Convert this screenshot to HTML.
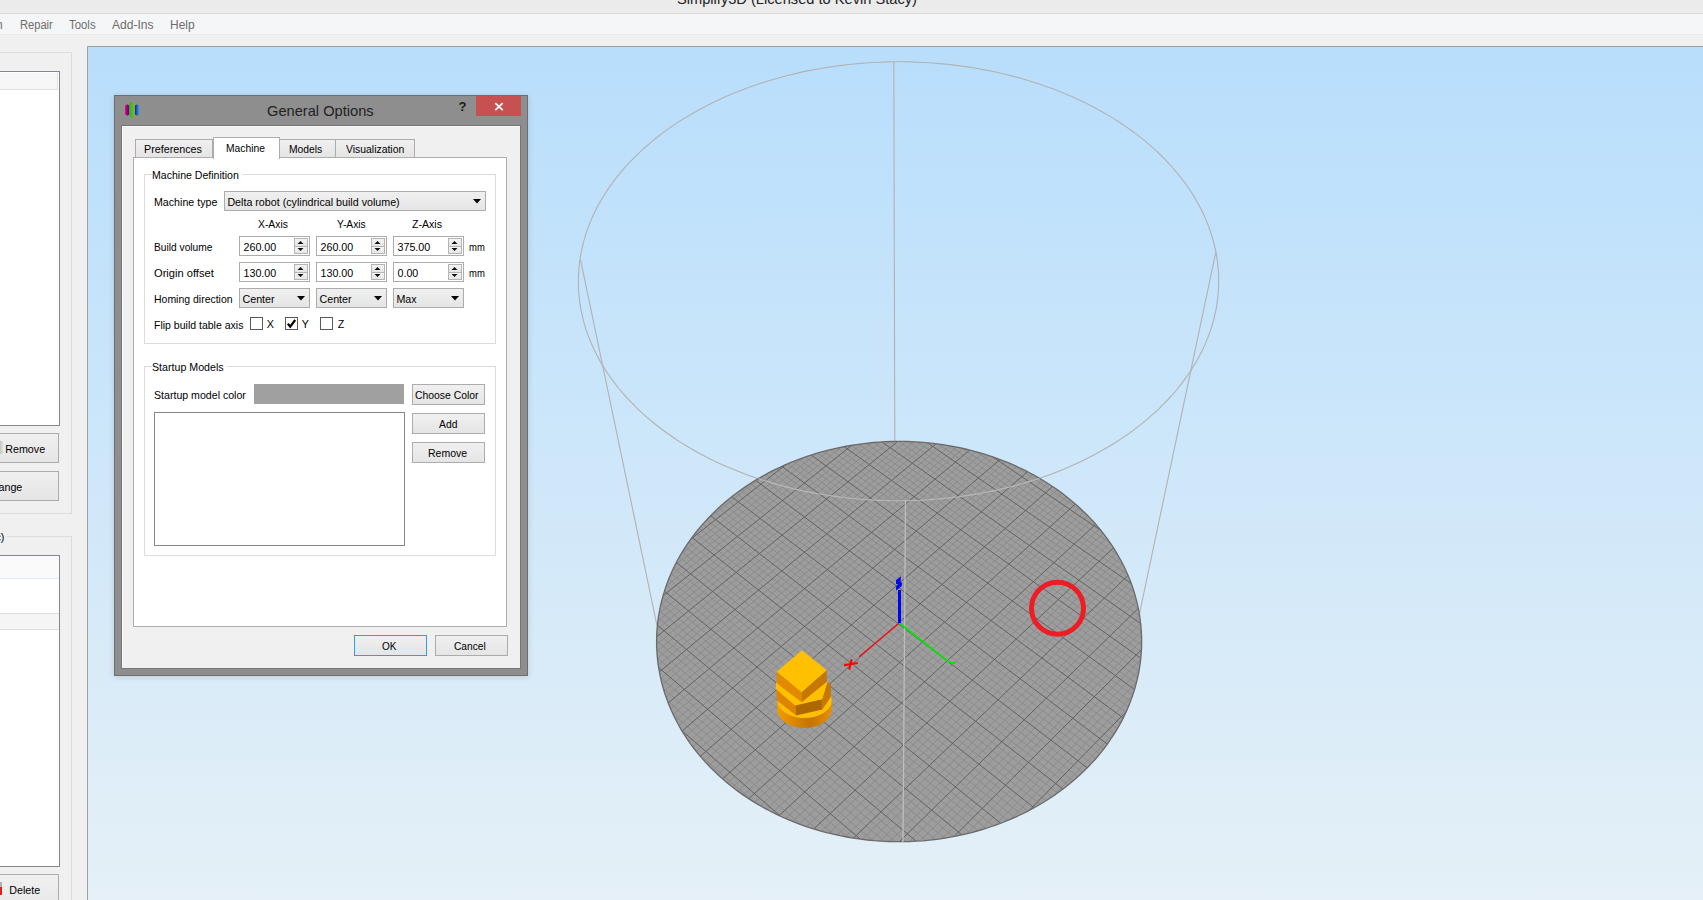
<!DOCTYPE html>
<html><head><meta charset="utf-8"><style>
html,body{margin:0;padding:0}
body{width:1703px;height:900px;position:relative;overflow:hidden;background:#f0f0f0;font-family:"Liberation Sans",sans-serif}
.b{position:absolute;box-sizing:content-box}
.t{position:absolute;white-space:nowrap;line-height:1}
</style></head><body>
<div class="b" style="left:0px;top:0px;width:1703px;height:13px;background:#ebebeb"></div>
<div class="b" style="left:0px;top:13px;width:1703px;height:1px;background:#d9d9d9"></div>
<div class="t" style="left:676.50px;top:-9.00px;font-size:15px;color:#222;transform:scaleX(0.9755);transform-origin:0 0;">Simplify3D (Licensed to Kevin Stacy)</div>
<div class="b" style="left:0px;top:14px;width:1703px;height:20px;background:#f5f6f7"></div>
<div class="b" style="left:0px;top:34px;width:1703px;height:1px;background:#e8e8e8"></div>
<div class="t" style="left:-4px;top:19.00px;font-size:12px;color:#6d6d6d;">n</div>
<div class="t" style="left:20.00px;top:19.00px;font-size:12px;color:#6d6d6d;transform:scaleX(0.9281);transform-origin:0 0;">Repair</div>
<div class="t" style="left:69.20px;top:19.00px;font-size:12px;color:#6d6d6d;transform:scaleX(0.9493);transform-origin:0 0;">Tools</div>
<div class="t" style="left:112.20px;top:19.00px;font-size:12px;color:#6d6d6d;transform:scaleX(1.0063);transform-origin:0 0;">Add-Ins</div>
<div class="t" style="left:170.20px;top:19.00px;font-size:12px;color:#6d6d6d;transform:scaleX(0.9976);transform-origin:0 0;">Help</div>
<div class="b" style="left:-10px;top:52px;width:80px;height:460px;border:1px solid #dcdcdc"></div>
<div class="b" style="left:-10px;top:71px;width:68px;height:353px;border:1px solid #828790;background:#fff"></div>
<div class="b" style="left:-10px;top:73px;width:67px;height:16px;background:#f7f7f7;border-right:1px solid #e0e0e0;border-bottom:1px solid #e0e0e0"></div>
<div class="b" style="left:-10px;top:433px;width:67px;height:28px;border:1px solid #acacac;background:linear-gradient(#f0f0f0,#e5e5e5);"></div>
<div class="t" style="left:5.3px;top:444.00px;font-size:10.7px;color:#000;">Remove</div>
<div class="b" style="left:-2px;top:441px;width:5px;height:13px;background:linear-gradient(90deg,#b0b0b0,#e0e0e0)"></div>
<div class="b" style="left:-10px;top:471px;width:67px;height:28px;border:1px solid #acacac;background:linear-gradient(#f0f0f0,#e5e5e5);"></div>
<div class="t" style="left:-1.5px;top:482.00px;font-size:10.7px;color:#000;">ange</div>
<div class="b" style="left:-10px;top:536px;width:80px;height:400px;border:1px solid #dcdcdc"></div>
<div class="t" style="left:-4.5px;top:532.00px;font-size:10.7px;color:#000;background:#f0f0f0;padding-right:3px">c)</div>
<div class="b" style="left:-10px;top:555px;width:68px;height:310px;border:1px solid #828790;background:#fff"></div>
<div class="b" style="left:-10px;top:556px;width:69px;height:22px;background:#fafafa;border-bottom:1px solid #e3ebf5"></div>
<div class="b" style="left:-10px;top:613px;width:69px;height:15px;background:#f5f5f5;border-top:1px solid #dedede;border-bottom:1px solid #dedede"></div>
<div class="b" style="left:-10px;top:874px;width:67px;height:44px;border:1px solid #acacac;background:linear-gradient(#f0f0f0,#e5e5e5);"></div>
<div class="t" style="left:9.3px;top:885.00px;font-size:10.7px;color:#000;">Delete</div>
<div class="b" style="left:-2px;top:882px;width:4px;height:13px;background:linear-gradient(#b0b0b0 40%,#e02020 40%)"></div>
<svg class="b" style="left:0;top:0" width="1703" height="900"><defs><linearGradient id="sky" x1="0" y1="0" x2="0" y2="1"><stop offset="0" stop-color="#b8defc"/><stop offset="1" stop-color="#e5f0f7"/></linearGradient><clipPath id="bedclip"><path d="M722.8,779.1 L727.6,783.2 L732.4,787.1 L737.4,790.9 L742.6,794.6 L747.9,798.1 L753.3,801.6 L758.8,804.9 L764.5,808.1 L770.3,811.2 L776.1,814.2 L782.1,817.0 L788.2,819.6 L794.4,822.2 L800.7,824.6 L807.0,826.8 L813.5,828.9 L820.0,830.8 L826.6,832.6 L833.2,834.2 L840.0,835.7 L846.7,837.0 L853.5,838.2 L860.4,839.2 L867.3,840.0 L874.2,840.7 L881.1,841.2 L888.1,841.5 L895.1,841.7 L902.0,841.7 L909.0,841.6 L915.9,841.2 L922.9,840.8 L929.8,840.1 L936.7,839.3 L943.6,838.3 L950.4,837.2 L957.1,835.9 L963.9,834.4 L970.5,832.8 L977.1,831.0 L983.7,829.1 L990.1,827.0 L996.5,824.8 L1002.8,822.5 L1009.0,819.9 L1015.1,817.3 L1021.1,814.5 L1027.0,811.6 L1032.8,808.5 L1038.5,805.3 L1044.0,802.0 L1049.5,798.5 L1054.8,795.0 L1059.9,791.3 L1065.0,787.5 L1069.9,783.6 L1074.6,779.6 L1079.2,775.5 L1083.7,771.3 L1088.0,767.0 L1092.2,762.6 L1096.2,758.2 L1100.0,753.6 L1103.7,749.0 L1107.2,744.3 L1110.5,739.5 L1113.7,734.7 L1116.7,729.8 L1119.6,724.9 L1122.3,719.9 L1124.8,714.8 L1127.1,709.7 L1129.3,704.6 L1131.2,699.4 L1133.0,694.3 L1134.7,689.0 L1136.1,683.8 L1137.4,678.6 L1138.6,673.3 L1139.5,668.0 L1140.3,662.7 L1140.9,657.4 L1141.3,652.2 L1141.6,646.9 L1141.6,641.6 L1141.6,636.4 L1141.3,631.1 L1140.9,625.9 L1140.3,620.7 L1139.6,615.5 L1138.7,610.4 L1137.7,605.3 L1136.4,600.2 L1135.1,595.2 L1133.6,590.2 L1131.9,585.2 L1130.1,580.3 L1128.1,575.5 L1126.0,570.7 L1123.8,566.0 L1121.4,561.3 L1118.8,556.7 L1116.2,552.2 L1113.4,547.7 L1110.5,543.3 L1107.4,538.9 L1104.2,534.7 L1100.9,530.5 L1097.5,526.3 L1094.0,522.3 L1090.4,518.4 L1086.6,514.5 L1082.7,510.7 L1078.8,507.0 L1074.7,503.4 L1070.5,499.9 L1066.3,496.4 L1061.9,493.1 L1057.5,489.9 L1052.9,486.7 L1048.3,483.7 L1043.6,480.7 L1038.8,477.9 L1034.0,475.1 L1029.1,472.5 L1024.1,469.9 L1019.0,467.5 L1013.9,465.2 L1008.7,462.9 L1003.4,460.8 L998.1,458.8 L992.8,456.9 L987.4,455.1 L981.9,453.4 L976.4,451.8 L970.9,450.3 L965.3,449.0 L959.7,447.7 L954.1,446.6 L948.4,445.6 L942.7,444.6 L937.0,443.8 L931.3,443.2 L925.5,442.6 L919.8,442.1 L914.0,441.8 L908.2,441.5 L902.4,441.4 L896.6,441.4 L890.9,441.5 L885.1,441.7 L879.3,442.1 L873.5,442.5 L867.8,443.1 L862.1,443.8 L856.3,444.6 L850.7,445.5 L845.0,446.5 L839.3,447.6 L833.7,448.8 L828.2,450.2 L822.6,451.7 L817.1,453.2 L811.7,454.9 L806.3,456.7 L800.9,458.6 L795.6,460.6 L790.3,462.7 L785.1,464.9 L780.0,467.3 L774.9,469.7 L769.9,472.2 L765.0,474.9 L760.1,477.6 L755.3,480.4 L750.6,483.4 L746.0,486.4 L741.4,489.6 L737.0,492.8 L732.6,496.1 L728.3,499.5 L724.1,503.0 L720.1,506.6 L716.1,510.3 L712.2,514.1 L708.4,518.0 L704.8,521.9 L701.2,525.9 L697.8,530.0 L694.5,534.2 L691.3,538.5 L688.2,542.8 L685.3,547.2 L682.5,551.7 L679.8,556.2 L677.2,560.8 L674.8,565.5 L672.5,570.2 L670.4,575.0 L668.4,579.8 L666.6,584.7 L664.9,589.7 L663.4,594.7 L662.0,599.7 L660.7,604.7 L659.7,609.8 L658.7,615.0 L658.0,620.1 L657.4,625.3 L656.9,630.6 L656.7,635.8 L656.6,641.0 L656.6,646.3 L656.9,651.6 L657.3,656.9 L657.8,662.2 L658.6,667.4 L659.5,672.7 L660.6,678.0 L661.8,683.2 L663.3,688.5 L664.9,693.7 L666.7,698.9 L668.6,704.0 L670.8,709.2 L673.1,714.3 L675.5,719.3 L678.2,724.3 L681.0,729.3 L684.0,734.1 L687.1,739.0 L690.5,743.8 L694.0,748.5 L697.6,753.1 L701.4,757.6 L705.4,762.1 L709.5,766.5 L713.8,770.8 L718.2,775.0 Z"/></clipPath><linearGradient id="basegrad" x1="0" y1="0" x2="1" y2="0"><stop offset="0" stop-color="#f59b00"/><stop offset="0.6" stop-color="#c47400"/><stop offset="1" stop-color="#e69000"/></linearGradient></defs><rect x="87" y="46" width="1616" height="854" fill="url(#sky)"/><path d="M87.5,900V46.5H1703" fill="none" stroke="#a0a0a0" stroke-width="1"/><path d="M661.0,428.7 L667.2,433.3 L673.7,437.7 L680.3,442.1 L687.1,446.3 L694.2,450.4 L701.4,454.4 L708.7,458.2 L716.3,461.9 L724.0,465.4 L731.9,468.8 L740.0,472.1 L748.1,475.2 L756.5,478.1 L764.9,480.8 L773.5,483.4 L782.2,485.9 L791.0,488.1 L800.0,490.2 L809.0,492.1 L818.1,493.8 L827.3,495.3 L836.5,496.6 L845.8,497.8 L855.2,498.8 L864.6,499.5 L874.0,500.1 L883.4,500.5 L892.9,500.7 L902.4,500.7 L911.9,500.5 L921.3,500.2 L930.8,499.6 L940.2,498.8 L949.5,497.9 L958.8,496.8 L968.1,495.4 L977.3,493.9 L986.4,492.2 L995.4,490.4 L1004.4,488.3 L1013.2,486.1 L1021.9,483.7 L1030.5,481.1 L1039.0,478.4 L1047.4,475.5 L1055.6,472.4 L1063.7,469.2 L1071.6,465.8 L1079.3,462.2 L1086.9,458.6 L1094.3,454.7 L1101.6,450.8 L1108.6,446.7 L1115.5,442.5 L1122.2,438.1 L1128.6,433.7 L1134.9,429.1 L1141.0,424.4 L1146.8,419.6 L1152.4,414.7 L1157.9,409.8 L1163.0,404.7 L1168.0,399.5 L1172.8,394.3 L1177.3,389.0 L1181.6,383.6 L1185.6,378.2 L1189.5,372.7 L1193.0,367.1 L1196.4,361.5 L1199.5,355.8 L1202.4,350.2 L1205.0,344.4 L1207.4,338.7 L1209.6,332.9 L1211.6,327.1 L1213.3,321.3 L1214.7,315.5 L1216.0,309.6 L1217.0,303.8 L1217.7,298.0 L1218.3,292.1 L1218.6,286.3 L1218.7,280.5 L1218.6,274.8 L1218.2,269.0 L1217.6,263.3 L1216.9,257.6 L1215.9,251.9 L1214.7,246.3 L1213.2,240.7 L1211.6,235.2 L1209.8,229.7 L1207.8,224.2 L1205.6,218.9 L1203.2,213.5 L1200.6,208.3 L1197.8,203.0 L1194.8,197.9 L1191.7,192.8 L1188.4,187.8 L1184.9,182.9 L1181.2,178.0 L1177.4,173.3 L1173.4,168.6 L1169.3,164.0 L1165.0,159.4 L1160.6,155.0 L1156.0,150.6 L1151.3,146.3 L1146.4,142.2 L1141.4,138.1 L1136.3,134.1 L1131.0,130.2 L1125.6,126.4 L1120.1,122.7 L1114.5,119.1 L1108.8,115.6 L1102.9,112.2 L1097.0,108.9 L1091.0,105.7 L1084.8,102.6 L1078.6,99.7 L1072.3,96.8 L1065.9,94.0 L1059.4,91.4 L1052.8,88.8 L1046.1,86.4 L1039.4,84.1 L1032.6,81.9 L1025.8,79.8 L1018.9,77.8 L1011.9,75.9 L1004.9,74.2 L997.8,72.5 L990.7,71.0 L983.5,69.6 L976.3,68.3 L969.1,67.1 L961.8,66.1 L954.5,65.1 L947.2,64.3 L939.8,63.6 L932.4,63.0 L925.1,62.5 L917.7,62.2 L910.3,61.9 L902.8,61.8 L895.4,61.8 L888.0,61.9 L880.6,62.2 L873.2,62.5 L865.8,63.0 L858.4,63.6 L851.1,64.3 L843.7,65.1 L836.4,66.0 L829.2,67.1 L821.9,68.2 L814.7,69.5 L807.5,70.9 L800.4,72.4 L793.3,74.1 L786.3,75.8 L779.3,77.7 L772.4,79.7 L765.5,81.7 L758.7,83.9 L752.0,86.2 L745.3,88.7 L738.8,91.2 L732.3,93.8 L725.8,96.6 L719.5,99.5 L713.2,102.4 L707.1,105.5 L701.0,108.7 L695.1,112.0 L689.2,115.4 L683.5,118.8 L677.8,122.4 L672.3,126.1 L666.9,129.9 L661.6,133.8 L656.5,137.8 L651.5,141.9 L646.6,146.0 L641.8,150.3 L637.2,154.6 L632.7,159.1 L628.4,163.6 L624.3,168.2 L620.3,172.9 L616.4,177.7 L612.7,182.5 L609.2,187.4 L605.9,192.4 L602.7,197.5 L599.7,202.6 L596.9,207.8 L594.3,213.1 L591.8,218.4 L589.6,223.8 L587.5,229.2 L585.7,234.7 L584.0,240.3 L582.6,245.8 L581.3,251.5 L580.3,257.1 L579.5,262.8 L578.9,268.5 L578.5,274.3 L578.3,280.0 L578.4,285.8 L578.7,291.6 L579.2,297.5 L579.9,303.3 L580.9,309.1 L582.1,315.0 L583.5,320.8 L585.1,326.6 L587.0,332.4 L589.2,338.2 L591.5,343.9 L594.1,349.6 L597.0,355.3 L600.0,361.0 L603.4,366.6 L606.9,372.2 L610.7,377.7 L614.7,383.1 L618.9,388.5 L623.4,393.8 L628.1,399.0 L633.1,404.2 L638.2,409.3 L643.6,414.3 L649.2,419.2 L655.0,424.0 Z" fill="none" stroke="#b2b2b2" stroke-width="1.1"/><path d="M893.8,62L894.8,441M580.5,259.6L657,625.6M1215.9,251.8L1139,616" fill="none" stroke="#b2b2b2" stroke-width="1.1"/><path d="M722.8,779.1 L727.6,783.2 L732.4,787.1 L737.4,790.9 L742.6,794.6 L747.9,798.1 L753.3,801.6 L758.8,804.9 L764.5,808.1 L770.3,811.2 L776.1,814.2 L782.1,817.0 L788.2,819.6 L794.4,822.2 L800.7,824.6 L807.0,826.8 L813.5,828.9 L820.0,830.8 L826.6,832.6 L833.2,834.2 L840.0,835.7 L846.7,837.0 L853.5,838.2 L860.4,839.2 L867.3,840.0 L874.2,840.7 L881.1,841.2 L888.1,841.5 L895.1,841.7 L902.0,841.7 L909.0,841.6 L915.9,841.2 L922.9,840.8 L929.8,840.1 L936.7,839.3 L943.6,838.3 L950.4,837.2 L957.1,835.9 L963.9,834.4 L970.5,832.8 L977.1,831.0 L983.7,829.1 L990.1,827.0 L996.5,824.8 L1002.8,822.5 L1009.0,819.9 L1015.1,817.3 L1021.1,814.5 L1027.0,811.6 L1032.8,808.5 L1038.5,805.3 L1044.0,802.0 L1049.5,798.5 L1054.8,795.0 L1059.9,791.3 L1065.0,787.5 L1069.9,783.6 L1074.6,779.6 L1079.2,775.5 L1083.7,771.3 L1088.0,767.0 L1092.2,762.6 L1096.2,758.2 L1100.0,753.6 L1103.7,749.0 L1107.2,744.3 L1110.5,739.5 L1113.7,734.7 L1116.7,729.8 L1119.6,724.9 L1122.3,719.9 L1124.8,714.8 L1127.1,709.7 L1129.3,704.6 L1131.2,699.4 L1133.0,694.3 L1134.7,689.0 L1136.1,683.8 L1137.4,678.6 L1138.6,673.3 L1139.5,668.0 L1140.3,662.7 L1140.9,657.4 L1141.3,652.2 L1141.6,646.9 L1141.6,641.6 L1141.6,636.4 L1141.3,631.1 L1140.9,625.9 L1140.3,620.7 L1139.6,615.5 L1138.7,610.4 L1137.7,605.3 L1136.4,600.2 L1135.1,595.2 L1133.6,590.2 L1131.9,585.2 L1130.1,580.3 L1128.1,575.5 L1126.0,570.7 L1123.8,566.0 L1121.4,561.3 L1118.8,556.7 L1116.2,552.2 L1113.4,547.7 L1110.5,543.3 L1107.4,538.9 L1104.2,534.7 L1100.9,530.5 L1097.5,526.3 L1094.0,522.3 L1090.4,518.4 L1086.6,514.5 L1082.7,510.7 L1078.8,507.0 L1074.7,503.4 L1070.5,499.9 L1066.3,496.4 L1061.9,493.1 L1057.5,489.9 L1052.9,486.7 L1048.3,483.7 L1043.6,480.7 L1038.8,477.9 L1034.0,475.1 L1029.1,472.5 L1024.1,469.9 L1019.0,467.5 L1013.9,465.2 L1008.7,462.9 L1003.4,460.8 L998.1,458.8 L992.8,456.9 L987.4,455.1 L981.9,453.4 L976.4,451.8 L970.9,450.3 L965.3,449.0 L959.7,447.7 L954.1,446.6 L948.4,445.6 L942.7,444.6 L937.0,443.8 L931.3,443.2 L925.5,442.6 L919.8,442.1 L914.0,441.8 L908.2,441.5 L902.4,441.4 L896.6,441.4 L890.9,441.5 L885.1,441.7 L879.3,442.1 L873.5,442.5 L867.8,443.1 L862.1,443.8 L856.3,444.6 L850.7,445.5 L845.0,446.5 L839.3,447.6 L833.7,448.8 L828.2,450.2 L822.6,451.7 L817.1,453.2 L811.7,454.9 L806.3,456.7 L800.9,458.6 L795.6,460.6 L790.3,462.7 L785.1,464.9 L780.0,467.3 L774.9,469.7 L769.9,472.2 L765.0,474.9 L760.1,477.6 L755.3,480.4 L750.6,483.4 L746.0,486.4 L741.4,489.6 L737.0,492.8 L732.6,496.1 L728.3,499.5 L724.1,503.0 L720.1,506.6 L716.1,510.3 L712.2,514.1 L708.4,518.0 L704.8,521.9 L701.2,525.9 L697.8,530.0 L694.5,534.2 L691.3,538.5 L688.2,542.8 L685.3,547.2 L682.5,551.7 L679.8,556.2 L677.2,560.8 L674.8,565.5 L672.5,570.2 L670.4,575.0 L668.4,579.8 L666.6,584.7 L664.9,589.7 L663.4,594.7 L662.0,599.7 L660.7,604.7 L659.7,609.8 L658.7,615.0 L658.0,620.1 L657.4,625.3 L656.9,630.6 L656.7,635.8 L656.6,641.0 L656.6,646.3 L656.9,651.6 L657.3,656.9 L657.8,662.2 L658.6,667.4 L659.5,672.7 L660.6,678.0 L661.8,683.2 L663.3,688.5 L664.9,693.7 L666.7,698.9 L668.6,704.0 L670.8,709.2 L673.1,714.3 L675.5,719.3 L678.2,724.3 L681.0,729.3 L684.0,734.1 L687.1,739.0 L690.5,743.8 L694.0,748.5 L697.6,753.1 L701.4,757.6 L705.4,762.1 L709.5,766.5 L713.8,770.8 L718.2,775.0 Z" fill="#9d9d9d"/><g clip-path="url(#bedclip)"><path d="M1013.8,465.1L1086.7,514.5M976.2,451.7L1110.6,543.4M962.2,448.3L1117.7,554.7M949.6,445.8L1123.2,565.0M938.2,444.0L1127.7,574.5M917.5,442.0L1134.2,592.2M908.0,441.5L1136.5,600.4M898.9,441.4L1138.3,608.4M890.2,441.5L1139.7,616.1M873.8,442.5L1141.3,630.9M866.0,443.3L1141.6,638.0M858.5,444.2L1141.6,644.9M851.2,445.4L1141.3,651.7M837.2,448.1L1140.0,664.8M830.4,449.6L1139.0,671.1M823.9,451.3L1137.7,677.4M817.5,453.1L1136.2,683.5M805.1,457.1L1132.7,695.4M799.1,459.3L1130.6,701.2M793.2,461.5L1128.3,706.9M787.5,463.9L1125.8,712.5M776.4,469.0L1120.4,723.4M771.0,471.7L1117.4,728.7M765.7,474.5L1114.2,733.9M760.6,477.3L1110.8,739.1M750.5,483.4L1103.6,749.0M745.7,486.6L1099.8,753.9M741.0,489.9L1095.8,758.6M736.3,493.3L1091.6,763.3M727.3,500.3L1082.7,772.3M723.0,504.0L1078.0,776.7M718.7,507.8L1073.1,780.9M714.6,511.7L1068.1,785.1M706.7,519.9L1057.5,793.1M702.8,524.1L1051.9,796.9M699.1,528.4L1046.2,800.7M695.5,532.9L1040.3,804.3M688.7,542.2L1027.9,811.1M685.4,547.0L1021.4,814.4M682.3,552.0L1014.7,817.5M679.3,557.1L1007.8,820.4M673.7,567.8L993.4,825.9M671.1,573.4L985.9,828.4M668.7,579.1L978.1,830.8M666.5,585.0L970.1,832.9M662.6,597.5L953.4,836.6M660.9,604.0L944.5,838.2M659.5,610.8L935.4,839.5M658.3,617.8L926.0,840.5M656.8,632.8L906.0,841.6M656.6,640.8L895.4,841.7M656.7,649.2L884.3,841.4M657.4,658.1L872.6,840.5M660.5,677.6L847.3,837.1M663.3,688.5L833.2,834.2M667.3,700.5L817.9,830.2M673.0,714.2L800.8,824.6M698.0,753.5L752.8,801.3M763.1,475.9L706.1,520.4M802.7,457.9L681.5,553.2M816.9,453.3L674.9,565.3M829.5,449.9L669.9,576.2M841.1,447.2L666.1,586.2M861.9,443.8L660.8,604.6M871.5,442.7L659.0,613.1M880.6,442.0L657.8,621.3M889.4,441.6L657.0,629.2M905.9,441.5L656.6,644.2M913.8,441.8L656.8,651.4M921.5,442.2L657.4,658.4M928.9,442.9L658.2,665.2M943.2,444.7L660.7,678.4M950.0,445.8L662.2,684.7M956.8,447.1L664.0,691.0M963.3,448.5L666.0,697.0M976.1,451.7L670.6,708.8M982.2,453.5L673.2,714.6M988.3,455.4L676.0,720.2M994.2,457.4L678.9,725.6M1005.7,461.7L685.4,736.3M1011.3,464.1L688.8,741.4M1016.8,466.5L692.5,746.5M1022.2,469.0L696.3,751.4M1032.7,474.4L704.4,761.0M1037.8,477.3L708.7,765.6M1042.9,480.3L713.1,770.1M1047.8,483.3L717.7,774.5M1057.3,489.8L727.4,783.0M1062.0,493.2L732.5,787.1M1066.5,496.6L737.7,791.1M1071.0,500.2L743.2,795.0M1079.6,507.8L754.5,802.3M1083.8,511.7L760.4,805.8M1087.9,515.8L766.4,809.2M1091.9,520.0L772.6,812.4M1099.5,528.7L785.6,818.5M1103.2,533.3L792.4,821.4M1106.7,538.0L799.3,824.1M1110.2,542.8L806.4,826.6M1116.7,553.0L821.3,831.2M1119.8,558.3L829.0,833.2M1122.7,563.8L836.9,835.1M1125.5,569.5L845.0,836.7M1130.5,581.5L862.0,839.4M1132.8,587.8L870.9,840.4M1134.9,594.4L880.1,841.1M1136.7,601.2L889.5,841.6M1139.6,615.8L909.4,841.5M1140.7,623.6L919.8,841.0M1141.4,631.8L930.7,840.0M1141.6,640.5L942.1,838.5M1140.6,659.7L966.7,833.8M1139.1,670.4L980.1,830.2M1136.5,682.3L994.6,825.5M1132.6,695.7L1010.6,819.2M1115.0,732.6L1052.5,796.5" fill="none" stroke="#868686" stroke-width="0.8"/><path d="M992.6,456.8L1101.1,530.6M927.5,442.8L1131.3,583.6M881.9,441.9L1140.7,623.6M844.1,446.6L1140.8,658.3M811.2,455.1L1134.5,689.5M781.9,466.4L1123.2,718.0M755.5,480.3L1107.3,744.1M731.8,496.8L1087.2,767.8M710.6,515.7L1062.9,789.1M692.0,537.5L1034.2,807.8M676.4,562.4L1000.7,823.3M664.4,591.1L961.9,834.9M657.4,625.2L916.2,841.2M658.6,667.5L860.3,839.2M681.8,730.6L780.5,816.2M785.9,464.6L690.8,539.1M851.8,445.3L663.1,595.7M897.8,441.4L656.6,636.8M936.1,443.7L659.3,671.9M969.8,450.0L668.2,703.0M1000.0,459.5L682.1,731.0M1027.5,471.7L700.2,756.3M1052.6,486.5L722.5,778.8M1075.4,504.0L748.7,798.7M1095.7,524.3L779.0,815.6M1113.5,547.8L813.7,829.0M1128.1,575.4L853.4,838.2M1138.3,608.3L899.3,841.7M1141.4,649.8L954.1,836.5M1126.3,711.5L1029.1,810.5" fill="none" stroke="#626262" stroke-width="1"/></g><path d="M722.8,779.1 L727.6,783.2 L732.4,787.1 L737.4,790.9 L742.6,794.6 L747.9,798.1 L753.3,801.6 L758.8,804.9 L764.5,808.1 L770.3,811.2 L776.1,814.2 L782.1,817.0 L788.2,819.6 L794.4,822.2 L800.7,824.6 L807.0,826.8 L813.5,828.9 L820.0,830.8 L826.6,832.6 L833.2,834.2 L840.0,835.7 L846.7,837.0 L853.5,838.2 L860.4,839.2 L867.3,840.0 L874.2,840.7 L881.1,841.2 L888.1,841.5 L895.1,841.7 L902.0,841.7 L909.0,841.6 L915.9,841.2 L922.9,840.8 L929.8,840.1 L936.7,839.3 L943.6,838.3 L950.4,837.2 L957.1,835.9 L963.9,834.4 L970.5,832.8 L977.1,831.0 L983.7,829.1 L990.1,827.0 L996.5,824.8 L1002.8,822.5 L1009.0,819.9 L1015.1,817.3 L1021.1,814.5 L1027.0,811.6 L1032.8,808.5 L1038.5,805.3 L1044.0,802.0 L1049.5,798.5 L1054.8,795.0 L1059.9,791.3 L1065.0,787.5 L1069.9,783.6 L1074.6,779.6 L1079.2,775.5 L1083.7,771.3 L1088.0,767.0 L1092.2,762.6 L1096.2,758.2 L1100.0,753.6 L1103.7,749.0 L1107.2,744.3 L1110.5,739.5 L1113.7,734.7 L1116.7,729.8 L1119.6,724.9 L1122.3,719.9 L1124.8,714.8 L1127.1,709.7 L1129.3,704.6 L1131.2,699.4 L1133.0,694.3 L1134.7,689.0 L1136.1,683.8 L1137.4,678.6 L1138.6,673.3 L1139.5,668.0 L1140.3,662.7 L1140.9,657.4 L1141.3,652.2 L1141.6,646.9 L1141.6,641.6 L1141.6,636.4 L1141.3,631.1 L1140.9,625.9 L1140.3,620.7 L1139.6,615.5 L1138.7,610.4 L1137.7,605.3 L1136.4,600.2 L1135.1,595.2 L1133.6,590.2 L1131.9,585.2 L1130.1,580.3 L1128.1,575.5 L1126.0,570.7 L1123.8,566.0 L1121.4,561.3 L1118.8,556.7 L1116.2,552.2 L1113.4,547.7 L1110.5,543.3 L1107.4,538.9 L1104.2,534.7 L1100.9,530.5 L1097.5,526.3 L1094.0,522.3 L1090.4,518.4 L1086.6,514.5 L1082.7,510.7 L1078.8,507.0 L1074.7,503.4 L1070.5,499.9 L1066.3,496.4 L1061.9,493.1 L1057.5,489.9 L1052.9,486.7 L1048.3,483.7 L1043.6,480.7 L1038.8,477.9 L1034.0,475.1 L1029.1,472.5 L1024.1,469.9 L1019.0,467.5 L1013.9,465.2 L1008.7,462.9 L1003.4,460.8 L998.1,458.8 L992.8,456.9 L987.4,455.1 L981.9,453.4 L976.4,451.8 L970.9,450.3 L965.3,449.0 L959.7,447.7 L954.1,446.6 L948.4,445.6 L942.7,444.6 L937.0,443.8 L931.3,443.2 L925.5,442.6 L919.8,442.1 L914.0,441.8 L908.2,441.5 L902.4,441.4 L896.6,441.4 L890.9,441.5 L885.1,441.7 L879.3,442.1 L873.5,442.5 L867.8,443.1 L862.1,443.8 L856.3,444.6 L850.7,445.5 L845.0,446.5 L839.3,447.6 L833.7,448.8 L828.2,450.2 L822.6,451.7 L817.1,453.2 L811.7,454.9 L806.3,456.7 L800.9,458.6 L795.6,460.6 L790.3,462.7 L785.1,464.9 L780.0,467.3 L774.9,469.7 L769.9,472.2 L765.0,474.9 L760.1,477.6 L755.3,480.4 L750.6,483.4 L746.0,486.4 L741.4,489.6 L737.0,492.8 L732.6,496.1 L728.3,499.5 L724.1,503.0 L720.1,506.6 L716.1,510.3 L712.2,514.1 L708.4,518.0 L704.8,521.9 L701.2,525.9 L697.8,530.0 L694.5,534.2 L691.3,538.5 L688.2,542.8 L685.3,547.2 L682.5,551.7 L679.8,556.2 L677.2,560.8 L674.8,565.5 L672.5,570.2 L670.4,575.0 L668.4,579.8 L666.6,584.7 L664.9,589.7 L663.4,594.7 L662.0,599.7 L660.7,604.7 L659.7,609.8 L658.7,615.0 L658.0,620.1 L657.4,625.3 L656.9,630.6 L656.7,635.8 L656.6,641.0 L656.6,646.3 L656.9,651.6 L657.3,656.9 L657.8,662.2 L658.6,667.4 L659.5,672.7 L660.6,678.0 L661.8,683.2 L663.3,688.5 L664.9,693.7 L666.7,698.9 L668.6,704.0 L670.8,709.2 L673.1,714.3 L675.5,719.3 L678.2,724.3 L681.0,729.3 L684.0,734.1 L687.1,739.0 L690.5,743.8 L694.0,748.5 L697.6,753.1 L701.4,757.6 L705.4,762.1 L709.5,766.5 L713.8,770.8 L718.2,775.0 Z" fill="none" stroke="#6a6a6a" stroke-width="1.3"/><path d="M661.0,428.7 L667.2,433.3 L673.7,437.7 L680.3,442.1 L687.1,446.3 L694.2,450.4 L701.4,454.4 L708.7,458.2 L716.3,461.9 L724.0,465.4 L731.9,468.8 L740.0,472.1 L748.1,475.2 L756.5,478.1 L764.9,480.8 L773.5,483.4 L782.2,485.9 L791.0,488.1 L800.0,490.2 L809.0,492.1 L818.1,493.8 L827.3,495.3 L836.5,496.6 L845.8,497.8 L855.2,498.8 L864.6,499.5 L874.0,500.1 L883.4,500.5 L892.9,500.7 L902.4,500.7 L911.9,500.5 L921.3,500.2 L930.8,499.6 L940.2,498.8 L949.5,497.9 L958.8,496.8 L968.1,495.4 L977.3,493.9 L986.4,492.2 L995.4,490.4 L1004.4,488.3 L1013.2,486.1 L1021.9,483.7 L1030.5,481.1 L1039.0,478.4 L1047.4,475.5 L1055.6,472.4 L1063.7,469.2 L1071.6,465.8 L1079.3,462.2 L1086.9,458.6 L1094.3,454.7 L1101.6,450.8 L1108.6,446.7 L1115.5,442.5 L1122.2,438.1 L1128.6,433.7 L1134.9,429.1 L1141.0,424.4 L1146.8,419.6 L1152.4,414.7 L1157.9,409.8 L1163.0,404.7 L1168.0,399.5 L1172.8,394.3 L1177.3,389.0 L1181.6,383.6 L1185.6,378.2 L1189.5,372.7 L1193.0,367.1 L1196.4,361.5 L1199.5,355.8 L1202.4,350.2 L1205.0,344.4 L1207.4,338.7 L1209.6,332.9 L1211.6,327.1 L1213.3,321.3 L1214.7,315.5 L1216.0,309.6 L1217.0,303.8 L1217.7,298.0 L1218.3,292.1 L1218.6,286.3 L1218.7,280.5 L1218.6,274.8 L1218.2,269.0 L1217.6,263.3 L1216.9,257.6 L1215.9,251.9 L1214.7,246.3 L1213.2,240.7 L1211.6,235.2 L1209.8,229.7 L1207.8,224.2 L1205.6,218.9 L1203.2,213.5 L1200.6,208.3 L1197.8,203.0 L1194.8,197.9 L1191.7,192.8 L1188.4,187.8 L1184.9,182.9 L1181.2,178.0 L1177.4,173.3 L1173.4,168.6 L1169.3,164.0 L1165.0,159.4 L1160.6,155.0 L1156.0,150.6 L1151.3,146.3 L1146.4,142.2 L1141.4,138.1 L1136.3,134.1 L1131.0,130.2 L1125.6,126.4 L1120.1,122.7 L1114.5,119.1 L1108.8,115.6 L1102.9,112.2 L1097.0,108.9 L1091.0,105.7 L1084.8,102.6 L1078.6,99.7 L1072.3,96.8 L1065.9,94.0 L1059.4,91.4 L1052.8,88.8 L1046.1,86.4 L1039.4,84.1 L1032.6,81.9 L1025.8,79.8 L1018.9,77.8 L1011.9,75.9 L1004.9,74.2 L997.8,72.5 L990.7,71.0 L983.5,69.6 L976.3,68.3 L969.1,67.1 L961.8,66.1 L954.5,65.1 L947.2,64.3 L939.8,63.6 L932.4,63.0 L925.1,62.5 L917.7,62.2 L910.3,61.9 L902.8,61.8 L895.4,61.8 L888.0,61.9 L880.6,62.2 L873.2,62.5 L865.8,63.0 L858.4,63.6 L851.1,64.3 L843.7,65.1 L836.4,66.0 L829.2,67.1 L821.9,68.2 L814.7,69.5 L807.5,70.9 L800.4,72.4 L793.3,74.1 L786.3,75.8 L779.3,77.7 L772.4,79.7 L765.5,81.7 L758.7,83.9 L752.0,86.2 L745.3,88.7 L738.8,91.2 L732.3,93.8 L725.8,96.6 L719.5,99.5 L713.2,102.4 L707.1,105.5 L701.0,108.7 L695.1,112.0 L689.2,115.4 L683.5,118.8 L677.8,122.4 L672.3,126.1 L666.9,129.9 L661.6,133.8 L656.5,137.8 L651.5,141.9 L646.6,146.0 L641.8,150.3 L637.2,154.6 L632.7,159.1 L628.4,163.6 L624.3,168.2 L620.3,172.9 L616.4,177.7 L612.7,182.5 L609.2,187.4 L605.9,192.4 L602.7,197.5 L599.7,202.6 L596.9,207.8 L594.3,213.1 L591.8,218.4 L589.6,223.8 L587.5,229.2 L585.7,234.7 L584.0,240.3 L582.6,245.8 L581.3,251.5 L580.3,257.1 L579.5,262.8 L578.9,268.5 L578.5,274.3 L578.3,280.0 L578.4,285.8 L578.7,291.6 L579.2,297.5 L579.9,303.3 L580.9,309.1 L582.1,315.0 L583.5,320.8 L585.1,326.6 L587.0,332.4 L589.2,338.2 L591.5,343.9 L594.1,349.6 L597.0,355.3 L600.0,361.0 L603.4,366.6 L606.9,372.2 L610.7,377.7 L614.7,383.1 L618.9,388.5 L623.4,393.8 L628.1,399.0 L633.1,404.2 L638.2,409.3 L643.6,414.3 L649.2,419.2 L655.0,424.0 Z" fill="none" stroke="#b8b8b8" stroke-width="1.1" clip-path="url(#bedclip)"/><path d="M905.5,500L903,842" fill="none" stroke="#bdbdbd" stroke-width="1.3"/><path d="M899.3,623L859.2,656.7" stroke="#f01010" stroke-width="1.5"/><path d="M851.7,659.2L849.2,669.4M844.2,665.2L857.8,663" stroke="#ff0000" stroke-width="2.2" fill="none"/><path d="M899.3,623L948.7,662L955.7,663.2" stroke="#00e800" stroke-width="1.6" fill="none"/><rect x="898" y="590" width="3" height="33" fill="#0000ff"/><path d="M896,580.3L900.8,576.2L900.8,581.2L899.4,582L901.9,582.6L901.9,585.8L896.1,590.8L896.1,586.3L898.5,584.6L896,583.8Z" fill="#0000ff"/><circle cx="1057.5" cy="608.2" r="26" fill="none" stroke="#ee1c24" stroke-width="5"/><path d="M777.2,700L777.2,709A27.3,19 0 0 0 831.8,709L831.8,700A27.3,18 0 0 1 777.2,700Z" fill="url(#basegrad)"/><ellipse cx="804.5" cy="700" rx="27.3" ry="18" fill="#ffbe00"/><polygon points="776,689 795.3,705.4 796,715.5 777,700.5" fill="#dd8400"/><polygon points="795.3,705.4 822,699.3 822.4,709.4 796,715.5" fill="#ad6800"/><polygon points="822,699.3 827.5,682 830.8,684.5 830.8,697 822.4,709.4" fill="#c47800"/><polygon points="776,682 801.7,702.2 803.2,702.5 795.3,705.4 776,689" fill="#ffc000"/><polygon points="801.7,702.2 826.7,681.7 827.5,682 822,699.3 803.2,702.5" fill="#ffc000"/><polygon points="776.7,671.7 801.7,692 801.7,702.2 776.7,683.3" fill="#e38900"/><polygon points="801.7,692 826.7,670.2 826.7,681.7 801.7,702.2" fill="#c67700"/><polygon points="802,650.2 826.7,670.2 801.7,692 776.7,671.7" fill="#ffc000"/></svg>
<div class="b" style="left:99px;top:85px;width:444px;height:606px;box-shadow:0 1px 6px rgba(0,0,0,0.14);left:114px;top:95px;width:414px;height:581px"></div>
<div class="b" style="left:114px;top:95px;width:412px;height:579px;border:1px solid #6e6e6e;background:#8e8e8e"></div>
<div class="b" style="left:121px;top:125px;width:398px;height:542px;border:1px solid #767676;background:#f0f0f0;box-shadow:inset 1px 1px 0 #f9f9f9"></div>
<svg class="b" style="left:122px;top:99px" width="20" height="22"><defs><linearGradient id="ic1" x1="0" x2="1"><stop offset="0" stop-color="#f0006a"/><stop offset="1" stop-color="#4a0090"/></linearGradient><linearGradient id="ic2" x1="0" x2="1"><stop offset="0" stop-color="#38a830"/><stop offset="1" stop-color="#78c020"/></linearGradient><linearGradient id="ic3" x1="0" x2="1"><stop offset="0" stop-color="#2a10a0"/><stop offset="1" stop-color="#20a8f0"/></linearGradient></defs><rect x="3.1" y="5.4" width="4.1" height="11" rx="2" ry="1.6" fill="url(#ic1)"/><path d="M9.2,2.9 L10.9,2.9 L12.8,4.8 L12.8,16.9 L10.9,18.8 L9.2,18.8 L7.3,16.9 L7.3,4.8Z" fill="url(#ic2)"/><rect x="13" y="5.4" width="4" height="11" rx="2" ry="1.6" fill="url(#ic3)"/></svg>
<div class="t" style="left:267.40px;top:103.00px;font-size:15px;color:#222;transform:scaleX(0.9762);transform-origin:0 0;">General Options</div>
<div class="t" style="left:458.5px;top:100.00px;font-size:13px;color:#1a1a1a;font-weight:bold">?</div>
<div class="b" style="left:476px;top:96px;width:45px;height:20px;background:#c75050"></div>
<svg class="b" style="left:494px;top:102px" width="10" height="9"><path d="M1.3,1.2L8.7,8.2M8.7,1.2L1.3,8.2" stroke="#fff" stroke-width="1.7"/></svg>
<div class="b" style="left:133px;top:157px;width:372px;height:468px;border:1px solid #adadad;background:#fff"></div>
<div class="b" style="left:135px;top:139px;width:76px;height:17px;border:1px solid #acacac;border-bottom:none;background:linear-gradient(#f0f0f0,#e5e5e5)"></div>
<div class="t" style="left:144.00px;top:144.00px;font-size:10.7px;color:#000;transform:scaleX(1.0057);transform-origin:0 0;">Preferences</div>
<div class="b" style="left:279px;top:139px;width:55px;height:17px;border:1px solid #acacac;border-bottom:none;background:linear-gradient(#f0f0f0,#e5e5e5)"></div>
<div class="t" style="left:289.20px;top:144.00px;font-size:10.7px;color:#000;transform:scaleX(0.9650);transform-origin:0 0;">Models</div>
<div class="b" style="left:335px;top:139px;width:78px;height:17px;border:1px solid #acacac;border-bottom:none;background:linear-gradient(#f0f0f0,#e5e5e5)"></div>
<div class="t" style="left:346.10px;top:144.00px;font-size:10.7px;color:#000;transform:scaleX(0.9738);transform-origin:0 0;">Visualization</div>
<div class="b" style="left:213px;top:137px;width:65px;height:21px;border:1px solid #acacac;border-bottom:none;background:#fff"></div>
<div class="t" style="left:226.10px;top:143.00px;font-size:10.7px;color:#000;transform:scaleX(0.9618);transform-origin:0 0;">Machine</div>
<div class="b" style="left:144px;top:174px;width:350px;height:168px;border:1px solid #dcdcdc"></div>
<div class="t" style="left:152.30px;top:170.00px;font-size:10.7px;color:#000;transform:scaleX(0.9874);transform-origin:0 0;background:#fff;padding-right:3px">Machine Definition</div>
<div class="t" style="left:153.60px;top:197.00px;font-size:10.7px;color:#000;transform:scaleX(0.9958);transform-origin:0 0;">Machine type</div>
<div class="b" style="left:224px;top:191px;width:260px;height:18px;border:1px solid #acacac;background:linear-gradient(#f0f0f0,#e5e5e5)"></div>
<div class="t" style="left:227.4px;top:197.00px;font-size:10.7px;color:#000;">Delta robot (cylindrical build volume)</div>
<svg class="b" style="left:472.5px;top:198.5px" width="8" height="5"><path d="M0,0H8L4,4.5Z" fill="#000"/></svg>
<div class="t" style="left:258.00px;top:219.00px;font-size:10.7px;color:#000;transform:scaleX(0.9702);transform-origin:0 0;">X-Axis</div>
<div class="t" style="left:336.80px;top:219.00px;font-size:10.7px;color:#000;transform:scaleX(0.9613);transform-origin:0 0;">Y-Axis</div>
<div class="t" style="left:412.40px;top:219.00px;font-size:10.7px;color:#000;transform:scaleX(0.9890);transform-origin:0 0;">Z-Axis</div>
<div class="t" style="left:153.70px;top:242.00px;font-size:10.7px;color:#000;transform:scaleX(0.9550);transform-origin:0 0;">Build volume</div>
<div class="b" style="left:239px;top:236px;width:69px;height:18px;border:1px solid #acacac;background:#fff"></div>
<div class="t" style="left:243.5px;top:242.00px;font-size:10.7px;color:#000;">260.00</div>
<div class="b" style="left:294px;top:238px;width:12px;height:7px;border:1px solid #b4b4b4;background:linear-gradient(#f4f4f4,#e6e6e6)"></div>
<div class="b" style="left:294px;top:246px;width:12px;height:6px;border:1px solid #b4b4b4;background:linear-gradient(#f4f4f4,#e6e6e6)"></div>
<svg class="b" style="left:297px;top:240px" width="8" height="13"><path d="M3.5,1L6.5,4H0.5Z M0.5,8H6.5L3.5,11Z" fill="#111"/></svg>
<div class="b" style="left:316px;top:236px;width:69px;height:18px;border:1px solid #acacac;background:#fff"></div>
<div class="t" style="left:320.5px;top:242.00px;font-size:10.7px;color:#000;">260.00</div>
<div class="b" style="left:371px;top:238px;width:12px;height:7px;border:1px solid #b4b4b4;background:linear-gradient(#f4f4f4,#e6e6e6)"></div>
<div class="b" style="left:371px;top:246px;width:12px;height:6px;border:1px solid #b4b4b4;background:linear-gradient(#f4f4f4,#e6e6e6)"></div>
<svg class="b" style="left:374px;top:240px" width="8" height="13"><path d="M3.5,1L6.5,4H0.5Z M0.5,8H6.5L3.5,11Z" fill="#111"/></svg>
<div class="b" style="left:393px;top:236px;width:69px;height:18px;border:1px solid #acacac;background:#fff"></div>
<div class="t" style="left:397.5px;top:242.00px;font-size:10.7px;color:#000;">375.00</div>
<div class="b" style="left:448px;top:238px;width:12px;height:7px;border:1px solid #b4b4b4;background:linear-gradient(#f4f4f4,#e6e6e6)"></div>
<div class="b" style="left:448px;top:246px;width:12px;height:6px;border:1px solid #b4b4b4;background:linear-gradient(#f4f4f4,#e6e6e6)"></div>
<svg class="b" style="left:451px;top:240px" width="8" height="13"><path d="M3.5,1L6.5,4H0.5Z M0.5,8H6.5L3.5,11Z" fill="#111"/></svg>
<div class="t" style="left:469.40px;top:242.00px;font-size:10.7px;color:#000;transform:scaleX(0.8869);transform-origin:0 0;">mm</div>
<div class="t" style="left:153.70px;top:268.00px;font-size:10.7px;color:#000;transform:scaleX(1.0415);transform-origin:0 0;">Origin offset</div>
<div class="b" style="left:239px;top:262px;width:69px;height:18px;border:1px solid #acacac;background:#fff"></div>
<div class="t" style="left:243.5px;top:268.00px;font-size:10.7px;color:#000;">130.00</div>
<div class="b" style="left:294px;top:264px;width:12px;height:7px;border:1px solid #b4b4b4;background:linear-gradient(#f4f4f4,#e6e6e6)"></div>
<div class="b" style="left:294px;top:272px;width:12px;height:6px;border:1px solid #b4b4b4;background:linear-gradient(#f4f4f4,#e6e6e6)"></div>
<svg class="b" style="left:297px;top:266px" width="8" height="13"><path d="M3.5,1L6.5,4H0.5Z M0.5,8H6.5L3.5,11Z" fill="#111"/></svg>
<div class="b" style="left:316px;top:262px;width:69px;height:18px;border:1px solid #acacac;background:#fff"></div>
<div class="t" style="left:320.5px;top:268.00px;font-size:10.7px;color:#000;">130.00</div>
<div class="b" style="left:371px;top:264px;width:12px;height:7px;border:1px solid #b4b4b4;background:linear-gradient(#f4f4f4,#e6e6e6)"></div>
<div class="b" style="left:371px;top:272px;width:12px;height:6px;border:1px solid #b4b4b4;background:linear-gradient(#f4f4f4,#e6e6e6)"></div>
<svg class="b" style="left:374px;top:266px" width="8" height="13"><path d="M3.5,1L6.5,4H0.5Z M0.5,8H6.5L3.5,11Z" fill="#111"/></svg>
<div class="b" style="left:393px;top:262px;width:69px;height:18px;border:1px solid #acacac;background:#fff"></div>
<div class="t" style="left:397.5px;top:268.00px;font-size:10.7px;color:#000;">0.00</div>
<div class="b" style="left:448px;top:264px;width:12px;height:7px;border:1px solid #b4b4b4;background:linear-gradient(#f4f4f4,#e6e6e6)"></div>
<div class="b" style="left:448px;top:272px;width:12px;height:6px;border:1px solid #b4b4b4;background:linear-gradient(#f4f4f4,#e6e6e6)"></div>
<svg class="b" style="left:451px;top:266px" width="8" height="13"><path d="M3.5,1L6.5,4H0.5Z M0.5,8H6.5L3.5,11Z" fill="#111"/></svg>
<div class="t" style="left:469.40px;top:268.00px;font-size:10.7px;color:#000;transform:scaleX(0.8869);transform-origin:0 0;">mm</div>
<div class="t" style="left:153.70px;top:294.00px;font-size:10.7px;color:#000;transform:scaleX(0.9800);transform-origin:0 0;">Homing direction</div>
<div class="b" style="left:239px;top:288px;width:69px;height:18px;border:1px solid #acacac;background:linear-gradient(#f0f0f0,#e5e5e5)"></div>
<div class="t" style="left:242.5px;top:294.00px;font-size:10.7px;color:#000;">Center</div>
<svg class="b" style="left:296.5px;top:295.5px" width="8" height="5"><path d="M0,0H8L4,4.5Z" fill="#000"/></svg>
<div class="b" style="left:316px;top:288px;width:69px;height:18px;border:1px solid #acacac;background:linear-gradient(#f0f0f0,#e5e5e5)"></div>
<div class="t" style="left:319.5px;top:294.00px;font-size:10.7px;color:#000;">Center</div>
<svg class="b" style="left:373.5px;top:295.5px" width="8" height="5"><path d="M0,0H8L4,4.5Z" fill="#000"/></svg>
<div class="b" style="left:393px;top:288px;width:69px;height:18px;border:1px solid #acacac;background:linear-gradient(#f0f0f0,#e5e5e5)"></div>
<div class="t" style="left:396.4px;top:294.00px;font-size:10.7px;color:#000;">Max</div>
<svg class="b" style="left:450.5px;top:295.5px" width="8" height="5"><path d="M0,0H8L4,4.5Z" fill="#000"/></svg>
<div class="t" style="left:153.70px;top:320.00px;font-size:10.7px;color:#000;transform:scaleX(0.9835);transform-origin:0 0;">Flip build table axis</div>
<div class="b" style="left:250px;top:317px;width:11px;height:11px;border:1px solid #5a5a5a;background:#fff"></div>
<div class="t" style="left:266.8px;top:319.00px;font-size:10.7px;color:#000;">X</div>
<div class="b" style="left:285px;top:317px;width:11px;height:11px;border:1px solid #5a5a5a;background:#fff"></div>
<div class="t" style="left:301.7px;top:319.00px;font-size:10.7px;color:#000;">Y</div>
<svg class="b" style="left:285px;top:317px" width="13" height="13"><path d="M2.8,6.6L5.2,9.6L10.2,3" fill="none" stroke="#000" stroke-width="2.2"/></svg>
<div class="b" style="left:320px;top:317px;width:11px;height:11px;border:1px solid #5a5a5a;background:#fff"></div>
<div class="t" style="left:337.7px;top:319.00px;font-size:10.7px;color:#000;">Z</div>
<div class="b" style="left:144px;top:366px;width:350px;height:188px;border:1px solid #dcdcdc"></div>
<div class="t" style="left:152.30px;top:362.00px;font-size:10.7px;color:#000;transform:scaleX(0.9964);transform-origin:0 0;background:#fff;padding-right:3px">Startup Models</div>
<div class="t" style="left:153.70px;top:390.00px;font-size:10.7px;color:#000;transform:scaleX(0.9917);transform-origin:0 0;">Startup model color</div>
<div class="b" style="left:254px;top:384px;width:150px;height:20px;background:#a0a0a0"></div>
<div class="b" style="left:412px;top:384px;width:71px;height:19px;border:1px solid #acacac;background:linear-gradient(#f0f0f0,#e5e5e5);"></div>
<div class="t" style="left:415.30px;top:390.00px;font-size:10.7px;color:#000;transform:scaleX(0.9720);transform-origin:0 0;">Choose Color</div>
<div class="b" style="left:154px;top:412px;width:249px;height:132px;border:1px solid #828790;background:#fff"></div>
<div class="b" style="left:412px;top:413px;width:71px;height:19px;border:1px solid #acacac;background:linear-gradient(#f0f0f0,#e5e5e5);"></div>
<div class="t" style="left:438.70px;top:419.00px;font-size:10.7px;color:#000;transform:scaleX(0.9661);transform-origin:0 0;">Add</div>
<div class="b" style="left:412px;top:442px;width:71px;height:19px;border:1px solid #acacac;background:linear-gradient(#f0f0f0,#e5e5e5);"></div>
<div class="t" style="left:428.20px;top:448.00px;font-size:10.7px;color:#000;transform:scaleX(0.9810);transform-origin:0 0;">Remove</div>
<div class="b" style="left:354px;top:635px;width:71px;height:19px;border:1px solid #3399ff;background:linear-gradient(#f0f0f0,#e5e5e5)"></div>
<div class="t" style="left:382.40px;top:641.00px;font-size:10.7px;color:#000;transform:scaleX(0.9378);transform-origin:0 0;">OK</div>
<div class="b" style="left:435px;top:635px;width:71px;height:19px;border:1px solid #acacac;background:linear-gradient(#f0f0f0,#e5e5e5);"></div>
<div class="t" style="left:454.40px;top:641.00px;font-size:10.7px;color:#000;transform:scaleX(0.9541);transform-origin:0 0;">Cancel</div>
</body></html>
